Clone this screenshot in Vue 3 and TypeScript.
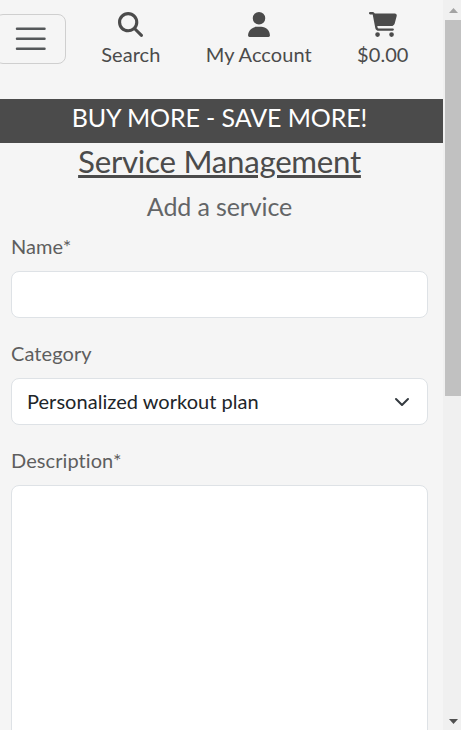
<script setup lang="ts">
import { ref } from 'vue'

interface NavLink {
  id: string
  label: string
  width: number
  viewBox: string
  path: string
}

const links: NavLink[] = [
  {
    id: 'search',
    label: 'Search',
    width: 25,
    viewBox: '0 0 512 512',
    path: 'M416 208c0 45.9-14.9 88.3-40 122.7L502.6 457.4c12.5 12.5 12.5 32.8 0 45.3s-32.8 12.5-45.3 0L330.7 376c-34.4 25.2-76.8 40-122.7 40C93.1 416 0 322.9 0 208S93.1 0 208 0S416 93.1 416 208zM208 352a144 144 0 1 0 0-288 144 144 0 1 0 0 288z',
  },
  {
    id: 'account',
    label: 'My Account',
    width: 22,
    viewBox: '0 0 448 512',
    path: 'M224 256A128 128 0 1 0 224 0a128 128 0 1 0 0 256zm-45.7 48C79.8 304 0 383.8 0 482.3C0 498.7 13.3 512 29.7 512H418.3c16.4 0 29.7-13.3 29.7-29.7C448 383.8 368.2 304 269.7 304H178.3z',
  },
  {
    id: 'bag',
    label: '$0.00',
    width: 28,
    viewBox: '0 0 576 512',
    path: 'M0 24C0 10.7 10.7 0 24 0H69.5c22 0 41.5 12.8 50.6 32h411c26.3 0 45.5 25 38.6 50.4l-41 152.3c-8.5 31.4-37 53.3-69.5 53.3H170.7l5.4 28.5c2.2 11.3 12.1 19.5 23.6 19.5H488c13.3 0 24 10.7 24 24s-10.7 24-24 24H199.7c-34.6 0-64.3-24.6-70.7-58.5L77.4 54.5c-.7-3.8-4-6.5-7.9-6.5H24C10.7 48 0 37.3 0 24zM128 464a48 48 0 1 1 96 0 48 48 0 1 1 -96 0zm336-48a48 48 0 1 1 0 96 48 48 0 1 1 0-96z',
  },
]

const name = ref('')
const category = ref('Personalized workout plan')
const description = ref('')
</script>

<template>
  <div class="window">
    <div class="page">
      <header class="header">
        <button class="toggler" type="button">
          <svg viewBox="0 0 30 30" class="toggler-icon">
            <path d="M4 7h22M4 15h22M4 23h22" />
          </svg>
        </button>
        <nav class="links">
          <a v-for="link in links" :key="link.id" class="link" :class="link.id">
            <svg class="link-icon" :width="link.width" height="25" :viewBox="link.viewBox">
              <path :d="link.path" />
            </svg>
            <span class="link-label">{{ link.label }}</span>
          </a>
        </nav>
      </header>
      <div class="banner">BUY MORE - SAVE MORE!</div>
      <main class="content">
        <h1 class="title">Service Management</h1>
        <h2 class="subtitle">Add a service</h2>
        <form class="form">
          <div class="field">
            <label class="label" for="name">Name*</label>
            <input id="name" v-model="name" class="control" type="text" />
          </div>
          <div class="field">
            <label class="label" for="category">Category</label>
            <div class="select-wrap">
              <select id="category" v-model="category" class="control select">
                <option>Personalized workout plan</option>
              </select>
              <svg class="chevron" viewBox="0 0 16 16">
                <path d="m2 5 6 6 6-6" />
              </svg>
            </div>
          </div>
          <div class="field">
            <label class="label" for="description">Description*</label>
            <textarea id="description" v-model="description" class="control area"></textarea>
          </div>
        </form>
      </main>
    </div>
    <div class="scrollbar">
      <svg class="arrow up" viewBox="0 0 16 20"><path d="M4 13h9L8.500 8z" /></svg>
      <div class="thumb"></div>
      <svg class="arrow down" viewBox="0 0 16 20"><path d="M4 9h9L8.500 14z" /></svg>
    </div>
  </div>
</template>

<style>
body {
  overflow: hidden;
  background: #f5f5f5;
}
</style>

<style scoped>
.window {
  display: flex;
  height: 730px;
  overflow: hidden;
  background: #f5f5f5;
  color: #4b4b4b;
  font-family: Lato, sans-serif;
  font-size: 20px;
  font-variant-ligatures: none;
  line-height: 30px;
}
.window *,
.window {
  box-sizing: border-box;
}
.page {
  width: 443px;
  flex: none;
}
.header {
  display: flex;
  height: 99px;
}
.toggler {
  display: flex;
  flex: none;
  align-items: center;
  justify-content: center;
  width: 71px;
  height: 50px;
  margin: 14px 0 0 -5px;
  padding: 0;
  border: 1px solid #cfcfcf;
  border-radius: 8px;
  background: transparent;
}
.toggler-icon {
  width: 37.5px;
  height: 37.5px;
  fill: none;
  stroke: #55585a;
  stroke-width: 2;
  stroke-linecap: round;
}
.links {
  display: flex;
  gap: 45.4px;
  margin-left: 35.2px;
  padding-top: 12px;
  letter-spacing: 0.06px;
}
.link {
  display: flex;
  flex-direction: column;
  align-items: center;
  white-space: nowrap;
}
.link-icon {
  display: block;
  flex: none;
  fill: #4b4b4b;
}
.link-label {
  margin-top: 2px;
}
.banner {
  height: 44px;
  padding-right: 4px;
  background: #4b4b4b;
  color: #fff;
  font-size: 25px;
  letter-spacing: -0.1px;
  line-height: 36px;
  text-align: center;
}
.content {
  padding: 0 15px 0 11px;
}
.title {
  margin: 0;
  font-size: 31.25px;
  font-weight: 400;
  letter-spacing: -0.27px;
  line-height: 36px;
  text-align: center;
  text-decoration: underline;
  text-decoration-thickness: 3px;
}
.subtitle {
  margin: 12px 0 0;
  color: #636567;
  font-size: 25px;
  font-weight: 400;
  letter-spacing: -0.12px;
  line-height: 30px;
  text-align: center;
}
.form {
  display: flex;
  flex-direction: column;
  gap: 20px;
  padding-top: 10px;
}
.field {
  display: flex;
  flex-direction: column;
  gap: 10px;
}
.label {
  color: #5e5e5e;
  letter-spacing: 0.08px;
}
.control {
  display: block;
  width: 100%;
  height: 47px;
  margin: 0;
  padding: 0 15px;
  border: 1px solid #dee2e6;
  border-radius: 8px;
  outline: 0;
  background: #fff;
  color: #212529;
  font: inherit;
}
.select-wrap {
  position: relative;
}
.select {
  padding-bottom: 2px;
  appearance: none;
  letter-spacing: 0.04px;
}
.chevron {
  position: absolute;
  top: 15.5px;
  right: 18px;
  width: 16px;
  height: 16px;
  fill: none;
  stroke: #343a40;
  stroke-width: 2;
  stroke-linecap: round;
  stroke-linejoin: round;
  pointer-events: none;
}
.area {
  height: 300px;
  resize: none;
}
.scrollbar {
  display: flex;
  flex: 1;
  flex-direction: column;
  padding-left: 2px;
  background: #f0f0f0;
}
.arrow {
  display: block;
  flex: none;
  width: 16px;
  height: 20px;
}
.up {
  fill: #a3a3a3;
}
.down {
  margin-top: auto;
  fill: #505050;
}
.thumb {
  height: 376px;
  background: #c1c1c1;
}
</style>
